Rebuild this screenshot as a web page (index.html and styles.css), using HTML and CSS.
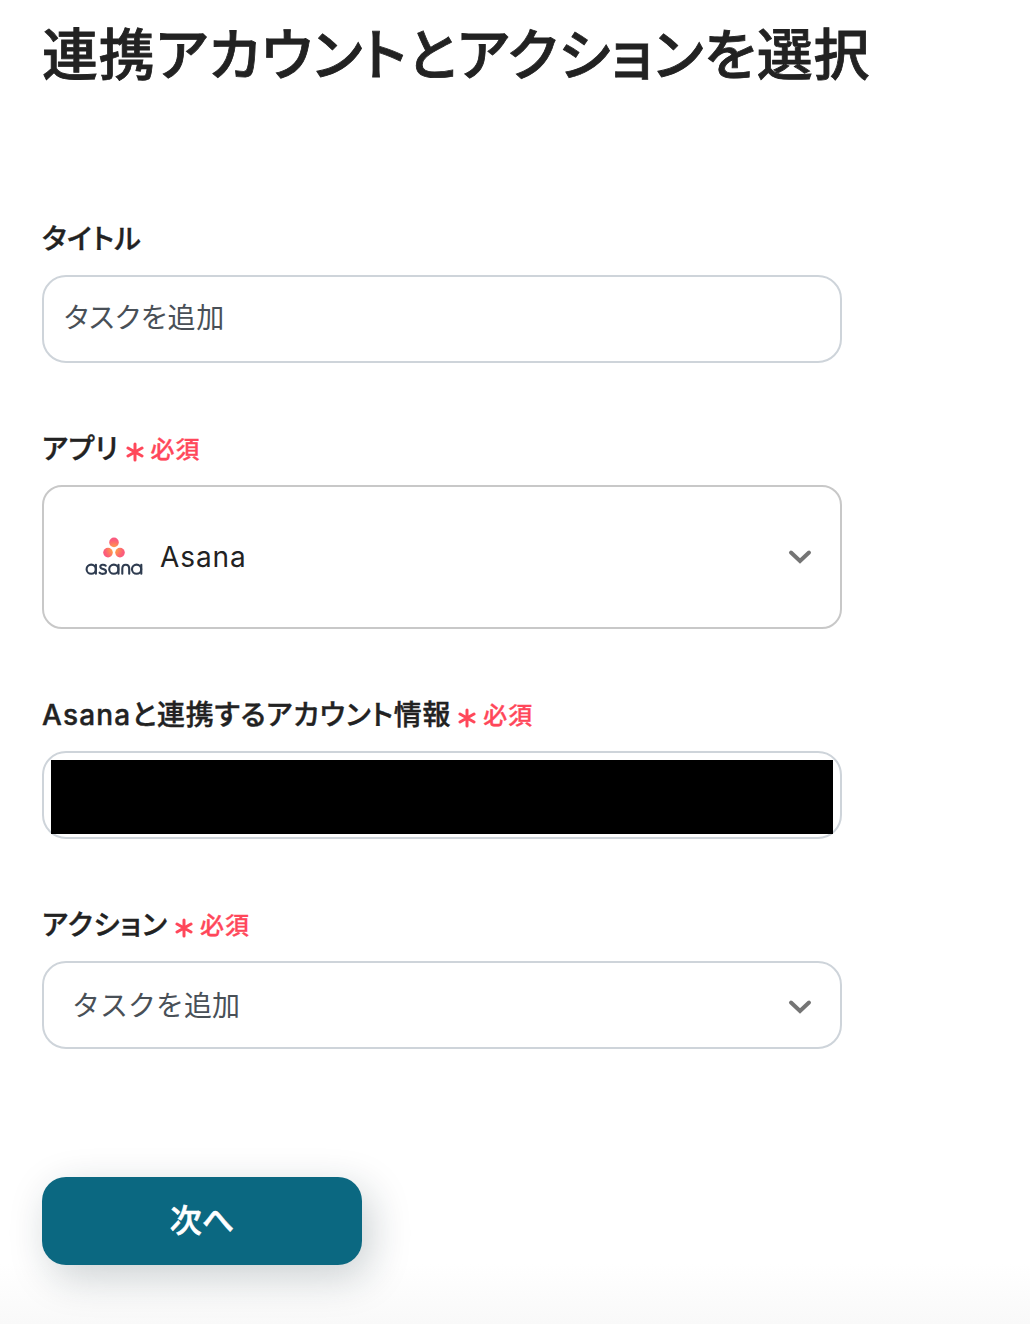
FILE: index.html
```html
<!DOCTYPE html>
<html lang="ja">
<head>
    <meta charset="UTF-8">
    <link rel="stylesheet" href="styles.css">
    <title>連携アカウントとアクションを選択</title>
</head>
<body>
    <main class="page">
        <h1>連携アカウントとアクションを選択</h1>

        <div class="field">
            <div class="label"><span class="name name-title">タイトル</span></div>
            <div class="box"><span class="value value-title">タスクを追加</span></div>
        </div>

        <div class="field">
            <div class="label">
                <span class="name name-app">アプリ</span>
                <svg class="star" viewBox="0 0 18 20"><path d="M9 2V18M2 6L16 14M16 6L2 14"/></svg>
                <span class="required">必須</span>
            </div>
            <div class="box app">
                <svg class="logo" width="60" height="42" viewBox="0 0 60 42">
                    <defs>
                        <radialGradient id="dots" gradientUnits="userSpaceOnUse" cx="30" cy="13.5" r="14">
                            <stop offset="0" stop-color="#ffb040"/>
                            <stop offset="0.3" stop-color="#ff8a55"/>
                            <stop offset="0.65" stop-color="#fb5f78"/>
                            <stop offset="1" stop-color="#f8528a"/>
                        </radialGradient>
                    </defs>
                    <g fill="url(#dots)">
                        <circle cx="30" cy="6.4" r="4.8"/>
                        <circle cx="24" cy="16.6" r="4.8"/>
                        <circle cx="36" cy="16.6" r="4.8"/>
                    </g>
                    <g fill="none" stroke="#2f3c50" stroke-width="2.1" stroke-linecap="round">
                        <circle cx="7.2" cy="33.2" r="4.6"/><path d="M11.9 28.8V37.8"/>
                        <circle cx="29.8" cy="33.2" r="4.6"/><path d="M34.5 28.8V37.8"/>
                        <circle cx="52.6" cy="33.2" r="4.6"/><path d="M57.3 28.8V37.8"/>
                        <path d="M21.7 29.7C20.5 28.5 16.3 28 16.3 30.8C16.3 33.8 22 32.2 22 35.4C22 38.5 17.3 38.3 15.6 36.7"/>
                        <path d="M38.3 37.8V32.8C38.3 27.3 45.2 27.3 45.2 32.8V37.8"/>
                    </g>
                </svg>
                <span class="app-name">Asana</span>
                <svg class="arrow" viewBox="0 0 24 16"><path d="M3 3.5L12 12L21 3.5"/></svg>
            </div>
        </div>

        <div class="field">
            <div class="label">
                <span class="name name-account"><span class="latin">Asana</span>と連携するアカウント情報</span>
                <svg class="star" viewBox="0 0 18 20"><path d="M9 2V18M2 6L16 14M16 6L2 14"/></svg>
                <span class="required">必須</span>
            </div>
            <div class="box account"><div class="mask"></div></div>
        </div>

        <div class="field">
            <div class="label">
                <span class="name name-action">アクション</span>
                <svg class="star" viewBox="0 0 18 20"><path d="M9 2V18M2 6L16 14M16 6L2 14"/></svg>
                <span class="required">必須</span>
            </div>
            <div class="box action">
                <span class="value value-action">タスクを追加</span>
                <svg class="arrow" viewBox="0 0 24 16"><path d="M3 3.5L12 12L21 3.5"/></svg>
            </div>
        </div>

        <button class="next">次へ</button>
    </main>
</body>
</html>
```
FILE: styles.css
```css
*{
    box-sizing: border-box;
}
body{
    margin: 0;
    height: 1324px;
    overflow: hidden;
    background: linear-gradient(#fff 0, #fff 1264px, #f9f9f9 1324px);
    color: #222;
    font-family: Inter, "Noto Sans CJK JP", sans-serif;
    font-feature-settings: "palt";
}
.page{
    padding: 15px 42px 0;
}
h1{
    margin: 0 0 124px;
    height: 80px;
    line-height: 80px;
    font-size: 56px;
    font-weight: 500;
    letter-spacing: 0.83px;
    white-space: nowrap;
    -webkit-text-stroke: 0.8px #222;
}
.field{
    width: 800px;
    margin-bottom: 66px;
}
.label{
    display: flex;
    align-items: center;
    height: 40px;
    margin-bottom: 16px;
    white-space: nowrap;
}
.name{
    font-size: 28px;
    font-weight: 500;
    line-height: 40px;
    letter-spacing: 0.6px;
    -webkit-text-stroke: 0.4px #222;
}
.name-account{
    letter-spacing: 0.75px;
}
.name-action{
    letter-spacing: 0.9px;
}
.latin{
    letter-spacing: 1.2px;
}
.star{
    width: 18px;
    height: 20px;
    margin: 6px 7px 0 7px;
    fill: none;
    stroke: #ff475a;
    stroke-width: 3;
    stroke-linecap: round;
}
.required{
    margin-top: 2px;
    color: #ff475a;
    font-size: 24px;
    font-weight: 500;
    line-height: 36px;
    letter-spacing: 1px;
    -webkit-text-stroke: 0.3px #ff475a;
}
.box{
    display: flex;
    align-items: center;
    height: 88px;
    border: 2px solid #ced4da;
    border-radius: 24px;
    background: #fff;
}
.value{
    color: #495057;
    font-size: 28px;
    line-height: 40px;
}
.value-title{
    margin: 0 0 3px 20px;
    letter-spacing: 0.7px;
}
.value-action{
    margin: 1px 0 0 28px;
    font-feature-settings: normal;
}
.app{
    height: 144px;
    border-color: #c8c8c8;
    border-radius: 20px;
}
.logo{
    margin-left: 40px;
}
.app-name{
    margin-left: 16px;
    font-size: 28px;
    letter-spacing: 0.9px;
}
.arrow{
    width: 24px;
    height: 16px;
    margin: 0 28px 0 auto;
    fill: none;
    stroke: #757575;
    stroke-width: 4;
    stroke-linecap: round;
}
.action .arrow{
    margin-top: 4px;
}
.account{
    padding: 4px 7px 0;
}
.mask{
    width: 782px;
    height: 74px;
    background: #000;
}
.next{
    display: block;
    width: 320px;
    height: 88px;
    margin-top: 128px;
    padding: 0 0 7px;
    border: none;
    border-radius: 24px;
    background: #0b6881;
    box-shadow: 8px 12px 40px rgba(20, 40, 50, 0.22);
    color: #fff;
    font-family: inherit;
    font-feature-settings: inherit;
    font-size: 32px;
    font-weight: 500;
    -webkit-text-stroke: 0.6px #fff;
}
```
